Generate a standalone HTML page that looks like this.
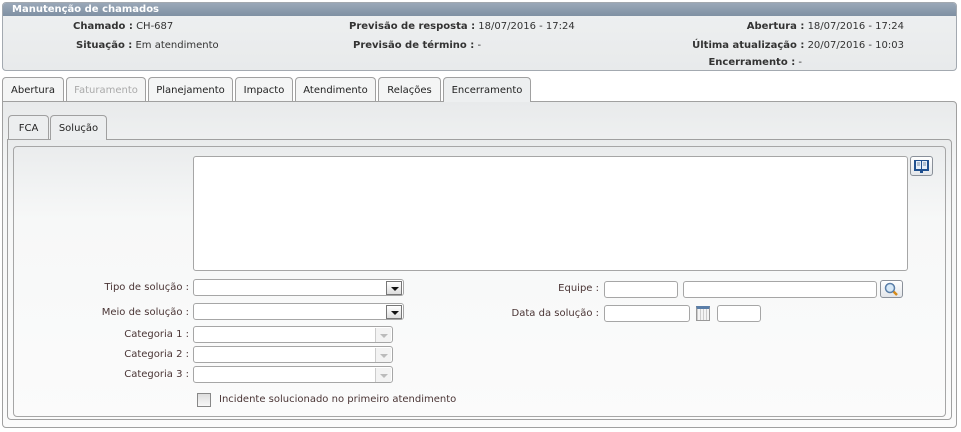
<!DOCTYPE html>
<html><head><meta charset="utf-8"><style>
*{box-sizing:border-box;margin:0;padding:0}
body{width:961px;height:432px;background:#fff;font-family:"DejaVu Sans","Liberation Sans",sans-serif;font-size:10px;color:#333;position:relative;overflow:hidden}
.a{position:absolute}
.hdr{left:2px;top:2px;width:955px;height:69px;border:1px solid #a3a9b0;border-radius:4px;background:linear-gradient(#eef0f1,#e8eaeb);overflow:hidden}
.ttl{left:0;top:0;width:100%;height:13px;background:linear-gradient(#9aa8b8,#7f90a3);color:#fff;font-weight:bold;font-size:10px;padding-left:9px;line-height:13px}
b{font-weight:bold;color:#333}
.t{white-space:nowrap;font-size:10px;line-height:12px}
.tab{top:77px;height:24px;border:1px solid #a0a0a0;border-bottom:none;border-radius:4px 4px 0 0;background:#f4f5f5;text-align:center;line-height:25px;font-size:10px;color:#222}
.pnl{left:2px;top:101px;width:955px;height:327px;border:1px solid #a0a0a0;border-radius:0 4px 4px 4px;background:linear-gradient(#e8eaeb,#f6f7f7 80px,#fbfbfb)}
.in{border:1px solid #a6a6a6;border-radius:3px;background:#fff}
.lbl{color:#4a3535;font-size:10px;text-align:right;white-space:nowrap}
.dd{position:absolute;right:1px;top:1px;width:16px;height:14px;border:1px solid #777;background:linear-gradient(#fff,#ddd);}
.dd:after{content:"";position:absolute;left:4px;top:5px;border-left:4px solid transparent;border-right:4px solid transparent;border-top:4px solid #111}
.ddg{position:absolute;right:1px;top:1px;width:16px;height:14px;border-left:1px solid #ccc;background:#f3f3f3}
.ddg:after{content:"";position:absolute;left:4px;top:6px;border-left:4px solid transparent;border-right:4px solid transparent;border-top:4px solid #bbb}
</style></head><body>
<div class="a hdr"><div class="a ttl">Manutenção de chamados</div></div>
<div class="a t" style="left:73px;top:21px"><b>Chamado :</b> CH-687</div>
<div class="a t" style="left:76px;top:40px"><b>Situação :</b> Em atendimento</div>
<div class="a t" style="left:349px;top:21px"><b>Previsão de resposta :</b> 18/07/2016 - 17:24</div>
<div class="a t" style="left:353px;top:40px"><b>Previsão de término :</b> -</div>
<div class="a t" style="right:57px;top:21px"><b>Abertura :</b> 18/07/2016 - 17:24</div>
<div class="a t" style="right:57px;top:40px"><b>Última atualização :</b> 20/07/2016 - 10:03</div>
<div class="a t" style="right:159px;top:57px"><b>Encerramento :</b> -</div>

<div class="a pnl"></div>
<div class="a tab" style="left:2px;width:62px">Abertura</div>
<div class="a tab" style="left:66px;width:80px;color:#aaa">Faturamento</div>
<div class="a tab" style="left:148px;width:85px">Planejamento</div>
<div class="a tab" style="left:235px;width:58px">Impacto</div>
<div class="a tab" style="left:295px;width:81px">Atendimento</div>
<div class="a tab" style="left:378px;width:63px">Relações</div>
<div class="a tab" style="left:443px;width:88px;height:25px;background:#edeff0">Encerramento</div>

<div class="a" style="left:7px;top:139px;width:945px;height:281px;border:1px solid #a0a0a0;border-radius:0 4px 4px 4px;background:linear-gradient(#e9ebec,#f7f8f8 80px,#fbfbfb)"></div>
<div class="a tab" style="left:8px;top:115px;width:41px;background:#eceeef">FCA</div>
<div class="a tab" style="left:50px;top:115px;width:57px;height:25px;background:#eceeef">Solução</div>
<div class="a" style="left:13px;top:146px;width:933px;height:271px;border:1px solid #a6a6a6;border-radius:4px"></div>

<div class="a in" style="left:193px;top:156px;width:715px;height:115px"></div>
<div class="a" style="left:910px;top:156px;width:23px;height:20px;border:1px solid #8a9099;border-radius:3px;background:linear-gradient(#fff,#e3e6ea)">
<svg width="21" height="18" style="position:absolute;left:0;top:0"><rect x="3" y="3" width="15" height="11" fill="#1f4f8f"/><rect x="5" y="4" width="5" height="8" fill="#e6eef8"/><rect x="11" y="4" width="5" height="8" fill="#e6eef8"/><line x1="6" y1="6" x2="9" y2="6" stroke="#7a8fa8"/><line x1="6" y1="8" x2="9" y2="8" stroke="#7a8fa8"/><line x1="12" y1="6" x2="15" y2="6" stroke="#7a8fa8"/><line x1="12" y1="8" x2="15" y2="8" stroke="#7a8fa8"/><rect x="9" y="14" width="3" height="2" fill="#1f4f8f"/></svg></div>

<div class="a lbl" style="right:772px;top:282px">Tipo de solução :</div>
<div class="a in" style="left:193px;top:279px;width:211px;height:17px"><div class="dd"></div></div>
<div class="a lbl" style="right:772px;top:307px">Meio de solução :</div>
<div class="a in" style="left:193px;top:303px;width:211px;height:17px"><div class="dd"></div></div>
<div class="a lbl" style="right:772px;top:329px">Categoria 1 :</div>
<div class="a in" style="left:193px;top:326px;width:200px;height:17px"><div class="ddg"></div></div>
<div class="a lbl" style="right:772px;top:349px">Categoria 2 :</div>
<div class="a in" style="left:193px;top:346px;width:200px;height:17px"><div class="ddg"></div></div>
<div class="a lbl" style="right:772px;top:369px">Categoria 3 :</div>
<div class="a in" style="left:193px;top:366px;width:200px;height:17px"><div class="ddg"></div></div>
<div class="a" style="left:197px;top:393px;width:14px;height:14px;border:1px solid #888;background:linear-gradient(#ddd,#f8f8f8)"></div>
<div class="a lbl" style="left:219px;top:394px;text-align:left">Incidente solucionado no primeiro atendimento</div>

<div class="a lbl" style="right:362px;top:283px">Equipe :</div>
<div class="a in" style="left:604px;top:281px;width:74px;height:17px"></div>
<div class="a in" style="left:683px;top:281px;width:194px;height:17px"></div>
<div class="a" style="left:880px;top:280px;width:23px;height:18px;border:1px solid #8a9099;border-radius:3px;background:linear-gradient(#fff,#e3e6ea)">
<svg width="21" height="16" style="position:absolute;left:0;top:0"><line x1="12" y1="10" x2="16" y2="14" stroke="#d58a1a" stroke-width="2.5"/><circle cx="9" cy="7" r="4.5" fill="#d6e8f7" stroke="#5a7ea8" stroke-width="1.5"/></svg></div>
<div class="a lbl" style="right:362px;top:308px">Data da solução :</div>
<div class="a in" style="left:604px;top:305px;width:86px;height:17px"></div>
<div class="a" style="left:696px;top:306px;width:14px;height:15px;border:1px solid #999;border-top:3px solid #5a7ea8;background:repeating-linear-gradient(90deg,#ccc 0 1px,#f4f4f4 1px 3px)"></div>
<div class="a in" style="left:717px;top:305px;width:44px;height:17px"></div>
</body></html>
